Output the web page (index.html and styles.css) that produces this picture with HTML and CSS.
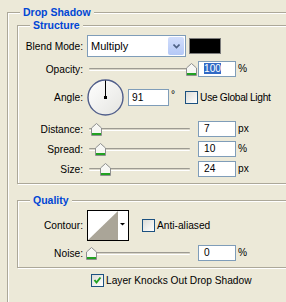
FILE: index.html
```html
<!DOCTYPE html>
<html lang="en">

<head>
    <meta charset="UTF-8">
    <title>Drop Shadow</title>
    <link rel="stylesheet" href="styles.css">
</head>

<body>
    <fieldset class="group outer">
        <legend>Drop Shadow</legend>

        <fieldset class="group inner">
            <legend>Structure</legend>

            <div class="row row-blend">
                <span class="lbl">Blend Mode:</span>
                <div class="select">
                    <span class="select-text">Multiply</span>
                    <span class="select-btn">
                        <svg width="7" height="5" viewBox="0 0 7 5"><polyline points="0.5,0.5 3.5,3.5 6.5,0.5" fill="none" stroke="#4d6185" stroke-width="1.6"/></svg>
                    </span>
                </div>
                <span class="swatch"></span>
            </div>

            <div class="row row-slider">
                <span class="lbl">Opacity:</span>
                <div class="slider">
                    <span class="track"></span>
                    <svg class="thumb" style="left: 99px" width="11" height="13" viewBox="0 0 11 13"><path d="M0.5 12.5V5L5.5 0.5L10.5 5V12.5Z" fill="#f7f7f4" stroke="#8e8f8f"/><rect x="1" y="10" width="9" height="2" fill="#21a121"/></svg>
                </div>
                <span class="field"><span class="selected">100</span></span>
                <span class="unit">%</span>
            </div>

            <div class="row row-angle">
                <span class="lbl">Angle:</span>
                <svg class="dial" width="37" height="37" viewBox="0 0 37 37">
                    <defs>
                        <linearGradient id="dialFill" x1="0" y1="0" x2="1" y2="1">
                            <stop offset="0" stop-color="#ffffff"/>
                            <stop offset="1" stop-color="#e4e4e0"/>
                        </linearGradient>
                    </defs>
                    <circle cx="18.5" cy="18.5" r="17.5" fill="url(#dialFill)" stroke="#4f5d8a" stroke-width="1.4"/>
                    <line x1="18.5" y1="1.5" x2="18.5" y2="18.5" stroke="#000" stroke-width="1"/>
                    <rect x="17" y="17" width="3" height="3" fill="#000"/>
                </svg>
                <span class="field field-angle">91</span>
                <span class="degree">°</span>
                <span class="check check-global"></span>
                <span class="check-text tight">Use Global Light</span>
            </div>

            <div class="row row-slider row-gap">
                <span class="lbl">Distance:</span>
                <div class="slider">
                    <span class="track"></span>
                    <svg class="thumb" style="left: 4px" width="11" height="13" viewBox="0 0 11 13"><path d="M0.5 12.5V5L5.5 0.5L10.5 5V12.5Z" fill="#f7f7f4" stroke="#8e8f8f"/><rect x="1" y="10" width="9" height="2" fill="#21a121"/></svg>
                </div>
                <span class="field">7</span>
                <span class="unit">px</span>
            </div>

            <div class="row row-slider">
                <span class="lbl">Spread:</span>
                <div class="slider">
                    <span class="track"></span>
                    <svg class="thumb" style="left: 8px" width="11" height="13" viewBox="0 0 11 13"><path d="M0.5 12.5V5L5.5 0.5L10.5 5V12.5Z" fill="#f7f7f4" stroke="#8e8f8f"/><rect x="1" y="10" width="9" height="2" fill="#21a121"/></svg>
                </div>
                <span class="field">10</span>
                <span class="unit">%</span>
            </div>

            <div class="row row-slider">
                <span class="lbl">Size:</span>
                <div class="slider">
                    <span class="track"></span>
                    <svg class="thumb" style="left: 13px" width="11" height="13" viewBox="0 0 11 13"><path d="M0.5 12.5V5L5.5 0.5L10.5 5V12.5Z" fill="#f7f7f4" stroke="#8e8f8f"/><rect x="1" y="10" width="9" height="2" fill="#21a121"/></svg>
                </div>
                <span class="field">24</span>
                <span class="unit">px</span>
            </div>
        </fieldset>

        <fieldset class="group inner quality">
            <legend>Quality</legend>

            <div class="row row-contour">
                <span class="lbl">Contour:</span>
                <svg class="contour" width="42" height="31" viewBox="0 0 42 31">
                    <rect x="0.5" y="0.5" width="41" height="30" fill="#fff" stroke="#000"/>
                    <polygon points="1,30 31,1 31,30" fill="#aaa598"/>
                    <polygon points="33,13 38,13 35.5,15.5" fill="#000"/>
                </svg>
                <span class="check check-anti"></span>
                <span class="check-text">Anti-aliased</span>
            </div>

            <div class="row row-slider row-noise">
                <span class="lbl">Noise:</span>
                <div class="slider">
                    <span class="track"></span>
                    <svg class="thumb" style="left: -1px" width="11" height="13" viewBox="0 0 11 13"><path d="M0.5 12.5V5L5.5 0.5L10.5 5V12.5Z" fill="#f7f7f4" stroke="#8e8f8f"/><rect x="1" y="10" width="9" height="2" fill="#21a121"/></svg>
                </div>
                <span class="field">0</span>
                <span class="unit">%</span>
            </div>
        </fieldset>

        <div class="row row-knock">
            <span class="check">
                <svg width="11" height="11" viewBox="0 0 11 11"><polyline points="2.5,5 4.5,7.5 8.5,2.5" fill="none" stroke="#21a121" stroke-width="2"/></svg>
            </span>
            <span class="check-text">Layer Knocks Out Drop Shadow</span>
        </div>
    </fieldset>
</body>

</html>
```

FILE: styles.css
```css
html,
body {
    margin: 0;
    height: 100%;
}

body {
    background-color: #ece9d8;
    font-family: "Liberation Sans", Arial, sans-serif;
    font-size: 10.2px;
    color: #000;
    overflow: hidden;
}

/* etched group boxes */
.group {
    margin: 0;
    padding: 0;
    min-width: 0;
    border: 1px solid #aca899;
    box-shadow: inset 1px 1px 0 #fff, 1px 1px 0 #fff;
}

.group > legend {
    height: 13px;
    line-height: 13px;
    padding: 0 3px;
    font-size: 10.5px;
    font-weight: bold;
    color: #0046d5;
    background-color: #ece9d8;
}

.outer {
    margin: 6px 0 0 7px;
    padding: 0 0 0 9px;
    width: 330px;
    height: 340px;
    box-sizing: border-box;
}

.outer > legend {
    margin-left: 3px;
}

.inner {
    padding: 3px 0 6px 0;
}

.inner > legend {
    margin-left: 12px;
}

.quality {
    margin-top: 10px;
}

/* rows */
.row {
    display: flex;
    align-items: center;
}

.lbl {
    flex: none;
    width: 65px;
    margin-right: 4px;
    text-align: right;
    white-space: nowrap;
}

.row-blend {
    height: 22px;
}

.row-slider {
    height: 16px;
    margin-top: 4px;
}

.row-angle {
    height: 37px;
    margin-top: 2px;
}

.row-gap {
    margin-top: 5px;
}

.row-contour {
    height: 31px;
}

.row-knock {
    height: 13px;
    margin: 6px 0 0 74px;
}

/* blend mode select */
.select {
    flex: none;
    display: flex;
    align-items: center;
    width: 99px;
    height: 22px;
    padding: 1px;
    box-sizing: border-box;
    border: 1px solid #7f9db9;
    background-color: #fff;
}

.select-text {
    flex: 1;
    padding-left: 2px;
    font-size: 11px;
}

.select-btn {
    display: flex;
    align-items: center;
    justify-content: center;
    width: 16px;
    height: 18px;
    border-radius: 2px;
    background: linear-gradient(#d2defc, #b4c8f6);
}

.swatch {
    flex: none;
    width: 32px;
    height: 16px;
    margin-left: 3px;
    box-sizing: border-box;
    border: 1px solid #7c7c7c;
    background-color: #000;
}

/* sliders */
.slider {
    flex: none;
    position: relative;
    width: 111px;
    height: 16px;
}

.track {
    position: absolute;
    left: 2px;
    top: 7px;
    width: 101px;
    height: 3px;
    box-sizing: border-box;
    border-top: 1px solid #9d9b92;
    border-bottom: 1px solid #fff;
    background-color: #d8d5c8;
    border-radius: 1px;
}

.thumb {
    position: absolute;
    top: 2px;
}

/* text fields */
.field {
    flex: none;
    width: 38px;
    height: 16px;
    box-sizing: border-box;
    padding-left: 5px;
    border: 1px solid #7f9db9;
    background-color: #fff;
    line-height: 14px;
}

.field-angle {
    width: 41px;
    height: 17px;
    line-height: 15px;
    padding-left: 3px;
}

.selected {
    background-color: #316ac5;
    color: #fff;
}

.unit {
    margin-left: 2px;
    margin-top: -2px;
}

.dial {
    flex: none;
    margin-right: 4px;
}

.degree {
    margin-left: 2px;
    margin-top: -6px;
}

.contour {
    flex: none;
}

/* checkboxes */
.check {
    flex: none;
    display: flex;
    align-items: center;
    justify-content: center;
    width: 13px;
    height: 13px;
    box-sizing: border-box;
    border: 1px solid #1c5180;
    background: linear-gradient(135deg, #dcdcd7, #fff);
}

.check-global {
    margin-left: 10px;
}

.check-anti {
    margin-left: 13px;
}

.check-text {
    margin-left: 2px;
    white-space: nowrap;
}

.tight {
    letter-spacing: -0.3px;
}
```
